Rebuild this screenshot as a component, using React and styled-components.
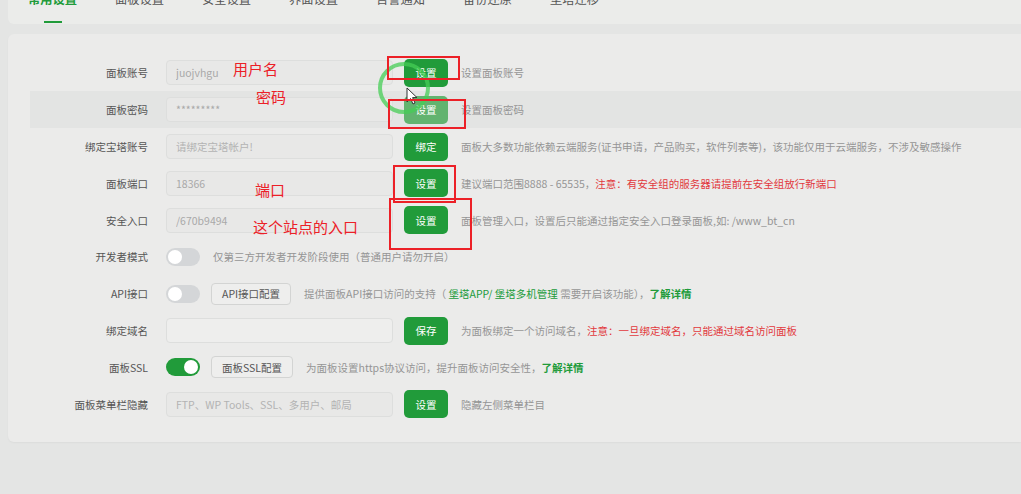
import React from 'react'
import styled, { createGlobalStyle } from 'styled-components'

const GlobalStyle = createGlobalStyle`
  html, body {
    margin: 0;
    padding: 0;
    background: #e4e5e4;
    font-family: "Noto Sans CJK SC", "Noto Sans", "Liberation Sans", sans-serif;
  }
`

const GREEN = '#219b3a'
const RED = '#e2393d'

const Page = styled.div`
  position: relative;
  width: 1021px;
  height: 494px;
  overflow: hidden;
  padding-left: 8px;
  box-sizing: border-box;
`

const TabCard = styled.div`
  margin-top: -14px;
  height: 38px;
  background: #ebecea;
  border-radius: 0 0 0 6px;
  display: flex;
  gap: 38px;
  padding-left: 20px;
  box-sizing: border-box;
`

const Tab = styled.div`
  position: relative;
  padding-top: 4px;
  font-size: 12.25px;
  line-height: 18px;
  color: ${p => (p.$active ? GREEN : '#555')};
  font-weight: ${p => (p.$active ? 600 : 400)};
  &::after {
    content: '';
    display: ${p => (p.$active ? 'block' : 'none')};
    position: absolute;
    left: 50%;
    bottom: 1px;
    width: 18px;
    height: 2px;
    margin-left: -9px;
    background: ${GREEN};
  }
  height: 100%;
  box-sizing: border-box;
`

const Card = styled.div`
  margin-top: 10px;
  background: #ebebea;
  border-radius: 6px 0 0 6px;
  padding: 20.6px 0 19.6px 22px;
  box-shadow: 0 1px 2px rgba(0, 0, 0, 0.04);
`

const Row = styled.div`
  display: flex;
  align-items: center;
  height: 36.8px;
  background: ${p => (p.$hover ? '#e3e4e3' : 'transparent')};
  font-size: 10.5px;
`

const Label = styled.div`
  width: 118px;
  margin-right: 18px;
  text-align: right;
  color: #555;
  white-space: nowrap;
`

const Input = styled.input`
  width: 227px;
  height: 25px;
  margin: 0 11px 0 0;
  padding: 0 9px;
  box-sizing: border-box;
  border: 1px solid #dddedd;
  border-radius: 4px;
  background: ${p => (p.$plain ? '#eeeeed' : '#e8e8e7')};
  color: #a9a9a9;
  font: inherit;
  font-size: 10.5px;
  outline: none;
  &::placeholder {
    color: #b3b3b3;
  }
`

const Button = styled.button`
  width: 44px;
  height: 28px;
  margin-right: 13px;
  border: none;
  border-radius: 5px;
  background: ${p => (p.$faded ? '#62b36f' : GREEN)};
  color: #fff;
  font: inherit;
  font-size: 10.5px;
  padding: 0;
`

const GhostButton = styled.button`
  height: 22px;
  margin: 0 13px 0 11px;
  padding: 0 10px;
  border: 1px solid #d3d4d3;
  border-radius: 4px;
  background: #eeeeed;
  color: #555;
  font: inherit;
  font-size: 10.5px;
`

const Toggle = styled.div`
  position: relative;
  width: 34px;
  height: 18px;
  border-radius: 9px;
  background: ${p => (p.$on ? GREEN : '#d4d6d8')};
  flex-shrink: 0;
  &::after {
    content: '';
    position: absolute;
    top: 2px;
    left: ${p => (p.$on ? '18px' : '2px')};
    width: 14px;
    height: 14px;
    border-radius: 50%;
    background: #fff;
  }
`

const Desc = styled.span`
  color: #959595;
  white-space: nowrap;
  margin-left: ${p => p.$ml || 0};
`

const Warn = styled.span`
  color: ${RED};
`

const Link = styled.span`
  color: ${GREEN};
  font-weight: ${p => (p.$bold ? 600 : 400)};
`

/* annotations drawn on top of the screenshot */
const Mark = styled.div`
  position: absolute;
  border: 2px solid #ec2027;
  box-sizing: border-box;
`

const Note = styled.div`
  position: absolute;
  color: #ec2027;
  font-size: 15px;
  line-height: 15px;
  white-space: nowrap;
`

const Overlay = styled.svg`
  position: absolute;
  pointer-events: none;
`

const tabs = ['常用设置', '面板设置', '安全设置', '界面设置', '告警通知', '备份还原', '堡塔迁移']

export default function App() {
  return (
    <>
      <GlobalStyle />
      <Page>
        <TabCard>
          {tabs.map((t, i) => (
            <Tab key={t} $active={i === 0}>{t}</Tab>
          ))}
        </TabCard>

        <Card>
          <Row>
            <Label>面板账号</Label>
            <Input readOnly value="juojvhgu" />
            <Button>设置</Button>
            <Desc>设置面板账号</Desc>
          </Row>
          <Row $hover>
            <Label>面板密码</Label>
            <Input readOnly value="*********" />
            <Button $faded>设置</Button>
            <Desc>设置面板密码</Desc>
          </Row>
          <Row>
            <Label>绑定宝塔账号</Label>
            <Input readOnly placeholder="请绑定宝塔帐户!" />
            <Button>绑定</Button>
            <Desc>面板大多数功能依赖云端服务(证书申请，产品购买，软件列表等)，该功能仅用于云端服务，不涉及敏感操作</Desc>
          </Row>
          <Row>
            <Label>面板端口</Label>
            <Input readOnly value="18366" />
            <Button>设置</Button>
            <Desc>建议端口范围8888 - 65535，<Warn>注意：有安全组的服务器请提前在安全组放行新端口</Warn></Desc>
          </Row>
          <Row>
            <Label>安全入口</Label>
            <Input readOnly value="/670b9494" />
            <Button>设置</Button>
            <Desc>面板管理入口，设置后只能通过指定安全入口登录面板,如: /www_bt_cn</Desc>
          </Row>
          <Row>
            <Label>开发者模式</Label>
            <Toggle />
            <Desc $ml="13px">仅第三方开发者开发阶段使用（普通用户请勿开启）</Desc>
          </Row>
          <Row>
            <Label>API接口</Label>
            <Toggle />
            <GhostButton>API接口配置</GhostButton>
            <Desc>提供面板API接口访问的支持（ <Link>堡塔APP/ 堡塔多机管理</Link> 需要开启该功能），<Link $bold>了解详情</Link></Desc>
          </Row>
          <Row>
            <Label>绑定域名</Label>
            <Input $plain readOnly />
            <Button>保存</Button>
            <Desc>为面板绑定一个访问域名，<Warn>注意：一旦绑定域名，只能通过域名访问面板</Warn></Desc>
          </Row>
          <Row>
            <Label>面板SSL</Label>
            <Toggle $on />
            <GhostButton>面板SSL配置</GhostButton>
            <Desc>为面板设置https协议访问，提升面板访问安全性，<Link $bold>了解详情</Link></Desc>
          </Row>
          <Row>
            <Label>面板菜单栏隐藏</Label>
            <Input readOnly placeholder="FTP、WP Tools、SSL、多用户、邮局" />
            <Button>设置</Button>
            <Desc>隐藏左侧菜单栏目</Desc>
          </Row>
        </Card>

        <Overlay width="60" height="60" style={{ left: 374, top: 58 }}>
          <circle cx="30" cy="30" r="24" fill="none" stroke="rgba(70,205,85,0.75)" strokeWidth="4" />
        </Overlay>
        <Overlay width="14" height="20" style={{ left: 406, top: 87 }}>
          <path d="M1 1 L1 15 L4.5 11.5 L7 17 L9 16 L6.6 10.6 L11 10.6 Z" fill="#fff" stroke="#333" strokeWidth="1" strokeLinejoin="round" />
        </Overlay>

        <Mark style={{ left: 387, top: 56, width: 73, height: 24 }} />
        <Mark style={{ left: 388, top: 99, width: 78, height: 30 }} />
        <Mark style={{ left: 393, top: 165, width: 63, height: 38 }} />
        <Mark style={{ left: 389, top: 198, width: 83, height: 52 }} />

        <Note style={{ left: 233, top: 61 }}>用户名</Note>
        <Note style={{ left: 256, top: 89 }}>密码</Note>
        <Note style={{ left: 255, top: 182 }}>端口</Note>
        <Note style={{ left: 253, top: 219 }}>这个站点的入口</Note>
      </Page>
    </>
  )
}
